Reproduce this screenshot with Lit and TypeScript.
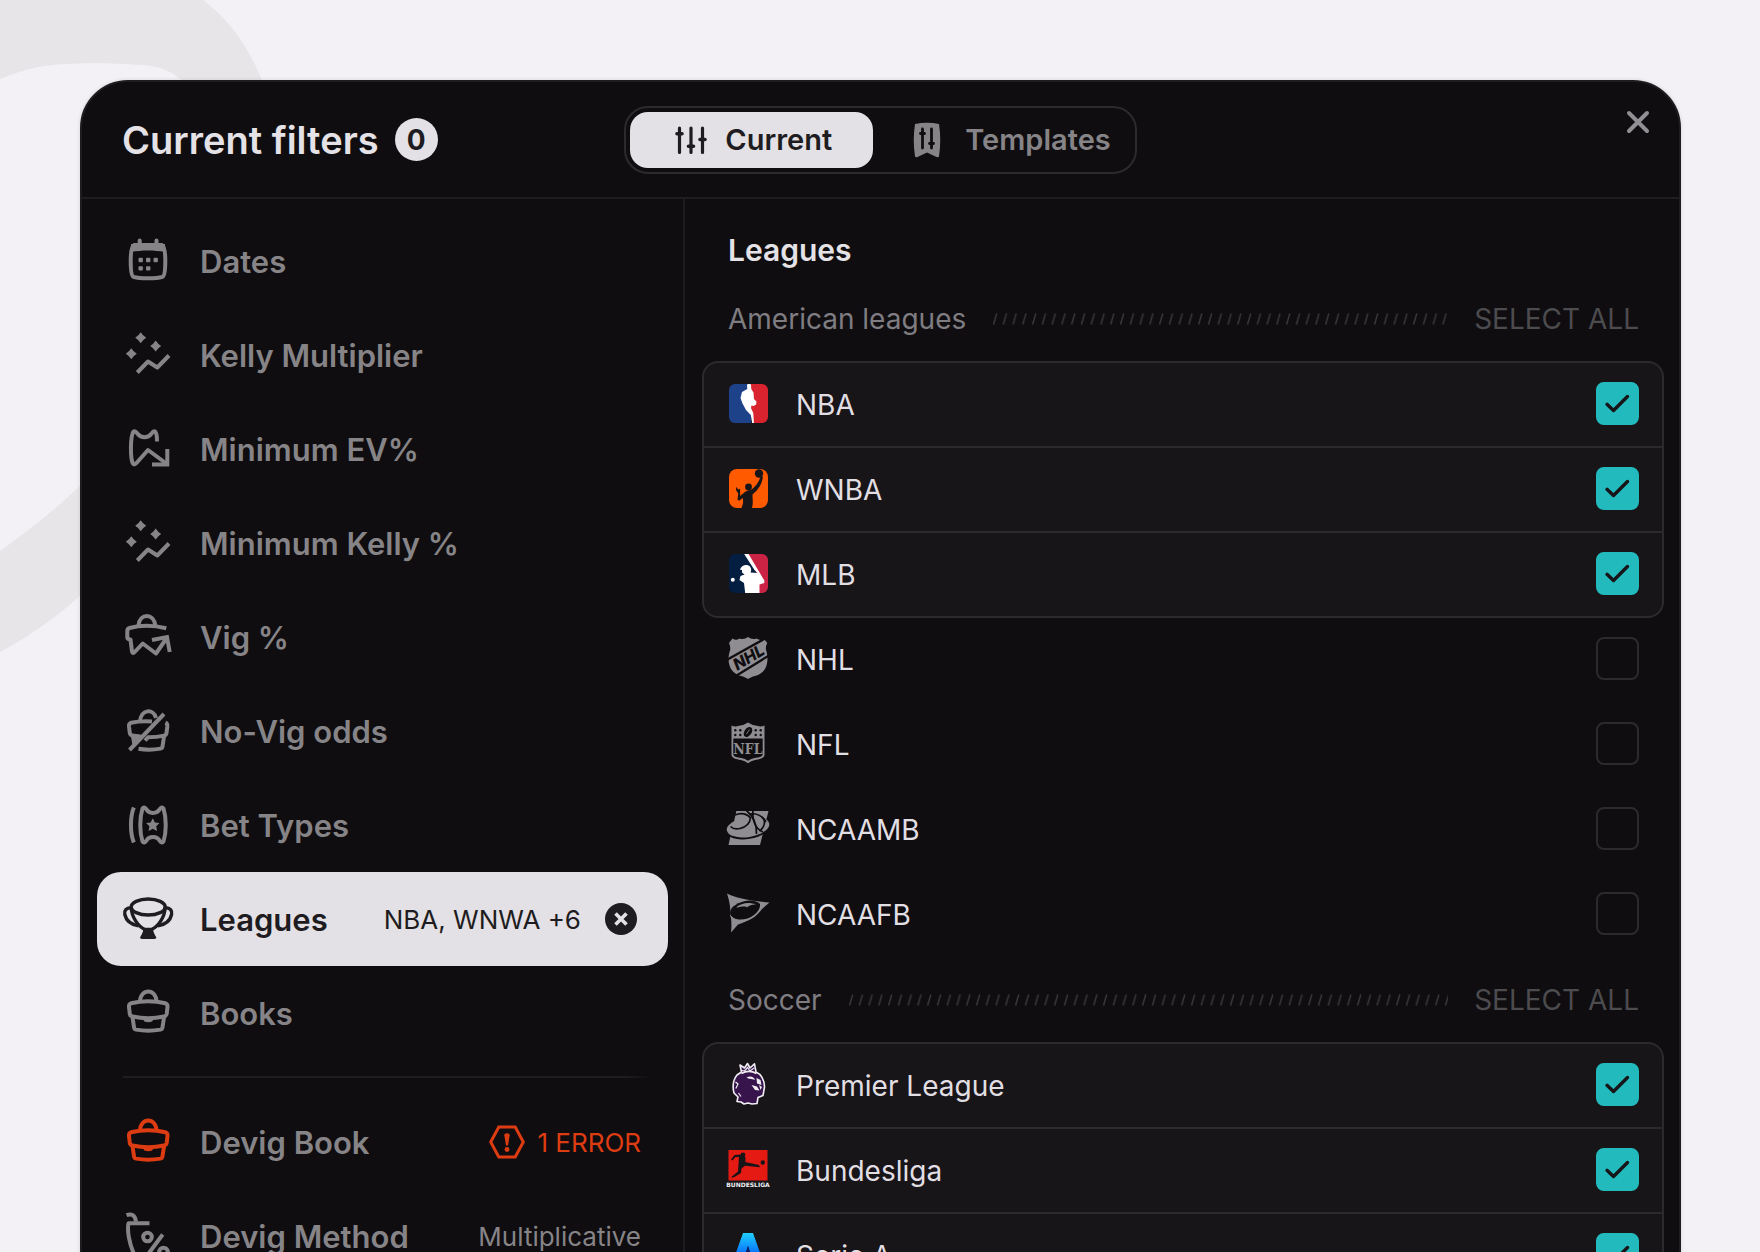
import { LitElement, html, svg, css, nothing } from "lit";
import type { TemplateResult } from "lit";
import { customElement, property, state } from "lit/decorators.js";
import { classMap } from "lit/directives/class-map.js";

type Shape = TemplateResult;

/* ---------- Sidebar icons, 48 x 48 ---------- */

const sparkTrend = svg`
  <g fill="currentColor" stroke="none">
    <path d="M16.700 1.200Q18.800 4.600 22.200 6.700Q18.800 8.800 16.700 12.200Q14.600 8.800 11.200 6.700Q14.600 4.600 16.700 1.200Z" />
    <path d="M31.700 9.500Q33.800 12.900 37.200 15Q33.800 17.100 31.700 20.500Q29.600 17.100 26.200 15Q29.600 12.900 31.700 9.500Z" />
    <path d="M7.300 17.200Q9.400 20.600 12.800 22.700Q9.400 24.800 7.300 28.200Q5.200 24.800 1.800 22.700Q5.200 20.600 7.300 17.200Z" />
  </g>
  <path d="M13.300 41.500L24 30.500L33.300 36.500L45 24.500" />`;

const briefcase = svg`
  <path d="M16 12.500C16.500 -.8 32 -.8 32.500 12.500" />
  <path d="M7 14.300C18 11.600 30.500 11.600 41.500 14.300C43 14.800 43.700 16 43.500 18L42.700 25C42.400 26.600 41.500 27.200 40 27.500C30 29.600 18.500 29.600 8.500 27.500C7 27.200 6 26.600 5.800 25L5 18C4.800 16 5.500 14.800 7 14.300Z" />
  <path d="M8.600 28.500L10 38.300C10.200 39.800 11 40.400 12 40.600C20 42 28.500 42 36.500 40.600C37.500 40.400 38.300 39.800 38.500 38.300L40 28.500" />
  <path d="M19.500 28H29V31C29 34 19.500 34 19.500 31Z" fill="currentColor" stroke="none" />`;

const ICONS: Record<string, Shape> = {
  calendar: svg`
    <path d="M10 8H38C40.500 9 41.300 15 41.300 24.500S40.500 39 38.500 39.800C32 41.800 16 41.800 9.500 39.800C7.500 39 6.700 34 6.700 24.500S7.500 9 10 8Z" />
    <path d="M7 7H41V15C30 13 18 13 7 15Z" fill="currentColor" stroke="none" />
    <path d="M15.700 3.500V8M32.500 3.500V8" stroke-linecap="round" />
    <g fill="currentColor" stroke="none">
      <rect x="14.500" y="20.800" width="4.400" height="4.400" rx="1" /><rect x="22" y="20.800" width="4.400" height="4.400" rx="1" />
      <rect x="29.500" y="20.800" width="4.400" height="4.400" rx="1" /><rect x="14.500" y="29.200" width="4.400" height="4.400" rx="1" />
      <rect x="22" y="29.200" width="4.400" height="4.400" rx="1" />
    </g>`,
  spark: sparkTrend,
  ticketDown: svg`
    <path d="M33 16.500C33 12 32.300 8 31.300 6.800C30 5.500 28.500 7 27.200 9C24 13.300 17 13.300 13.800 9C12.500 7 10.800 5.500 9.300 6.800C6.300 12 6.200 33 8.800 38.500C9.800 40 11.200 39.500 12.500 38L24 25L43 39" />
    <path d="M43.300 24V39.500H28" stroke-linejoin="miter" />`,
  bagUp: svg`
    <path d="M14.500 12.500C15.500 -.2 30 -.2 31.300 12.500" />
    <path d="M42.300 15.300C30 12.300 16 12.300 5.500 15C4 15.500 3.300 16.500 3.300 18V24.500C3.500 26 4.500 26.500 6.500 26.500L8 38.500C8.300 40.500 9.500 40.500 10.700 39L18.700 30.500L32 40.500L42 26" />
    <path d="M28 27L43 24L45.700 39" stroke-linejoin="miter" />`,
  bagOff: svg`
    <path d="M16 15C16.500 2 29.500 1 32 11" />
    <path d="M28 14.500C20 14 13 14.500 7 15.800C5.500 16.300 4.800 17.500 5 19.500L5.800 26C6 27.500 7 28.300 8.500 28.600L17 29.800" />
    <path d="M9 29L10.300 37.500L17 30Z" fill="currentColor" />
    <path d="M41.500 15.500C43 16.300 43.500 17.500 43.300 19.500L42.500 26C42.300 27.500 41.500 28.300 40 28.600C34 30 30 30.200 24 30.300L21 33.500" />
    <path d="M40 29.500L38.500 39.500C38.300 41 37.500 41.400 36.500 41.600C29 43 22 43 14.500 41.800" />
    <path d="M40 7L5.500 43" />`,
  tickets: svg`
    <path d="M9.800 6.500C6 16 6 32 9.800 41.500" />
    <path d="M18.500 7.500C19.500 6 21 6.300 22 7.800C25 13.300 33 13.300 36 7.800C37 6.300 38.500 6 39.500 7.500C42.500 17 42.500 31 39.500 40.500C38.500 42 37 41.700 36 40.200C33 34.700 25 34.700 22 40.200C21 41.700 19.500 42 18.500 40.500C15.500 31 15.500 17 18.500 7.500Z" />
    <path d="M28.800 17.200L30.900 21.500L35.500 22.100L32.200 25.300L33 30L28.800 27.800L24.600 30L25.400 25.300L22.100 22.100L26.700 21.500Z" fill="currentColor" stroke="none" />`,
  trophy: svg`
    <g stroke-width="3.400">
      <ellipse cx="24.200" cy="12" rx="17" ry="8" />
      <path d="M7.200 12C7.500 22 14 31.500 21 34.500H27.400C34.400 31.500 40.900 22 41.200 12" />
      <path d="M7.500 12.800C2 12.500 0 16 .8 19.500C2 25 7 29.500 14.500 30.800" />
      <path d="M40.900 12.800C46.400 12.500 48.400 16 47.600 19.500C46.400 25 41.400 29.500 33.900 30.800" />
    </g>
    <path d="M19 33H29.400C28.800 36.500 30 38.500 32.400 42.500Q32 44 30 44H18.400Q16.400 44 16 42.500C18.400 38.500 19.600 36.500 19 33Z" fill="currentColor" stroke="none" />`,
  briefcase,
  percentBag: svg`
    <path d="M2.500 3.200C7 1.500 11 2.500 12 9.500" />
    <path d="M25.500 11.200H4.500C3 18 5 32 11 44" />
    <circle cx="23.500" cy="25" r="4.300" /><circle cx="39.500" cy="40" r="4.300" />
    <path d="M38.700 22.500L25 41" />`,
};

/* ---------- League logos, 44 x 44 ---------- */

const LOGOS: Record<string, Shape> = {
  nba: svg`
    <clipPath id="c"><rect x="3" y="2" width="39" height="39" rx="6" /></clipPath>
    <g clip-path="url(#c)">
      <rect width="25" height="44" fill="#1d428a" />
      <path d="M24 0H44V44H27L25 26Z" fill="#d9232e" />
      <path d="M22 1L25 2.500L25.300 7L27.500 10.500L28 17L30.400 19.500L30.200 22.500L27.500 24L25.500 23.500L25 26L27.300 31L28 42H26.300L24.800 33L20 28L16.500 21.500L14.500 16L16 10L21.300 7L21 3.500Z" fill="#fff" />
    </g>`,
  wnba: svg`
    <rect x="3" y="2" width="39" height="39" rx="8" fill="#ff5a00" />
    <g fill="#171518">
      <circle cx="33" cy="6.500" r="4.200" /><circle cx="22.500" cy="20" r="3.400" />
      <path d="M34.500 9L37 9.500C36 17 32.500 22.500 26.500 27.500C26.500 33 27.500 35 26 41H15.500C17.500 36 17.300 34 16.800 31L13 33.800L11.500 32.500L12.300 26.500L10 23L10.300 19.800L12 22.500L14 21.800L14.200 29L19.500 24.500L25.500 22.500C30 19 33.500 14.500 34.500 9Z" />
    </g>`,
  mlb: svg`
    <clipPath id="c"><rect x="3" y="2" width="39" height="39" rx="6" /></clipPath>
    <g clip-path="url(#c)">
      <rect width="44" height="44" fill="#041e42" />
      <path d="M20 0H44V44H32V24Z" fill="#cb2344" />
      <path d="M17.500 1H22L38.300 28.500L38.300 31L33.500 32.500V42H19.300L18 31L13.500 28L14.500 24L18.500 22.500L16 20.500V18L14 17.800C15 13 21 11.500 24 14.500C25.500 16.500 25.500 18.500 24.500 20.500L31.500 21L28.500 18Z" fill="#fff" />
      <circle cx="6.800" cy="27.800" r="2" fill="#fff" />
    </g>`,
  nhl: svg`
    <path d="M3 6L6.500 1.500Q10 4 13.500 1.500Q18 3 22 0Q26 3 30.500 1.500Q34 4 38 2L41.300 6Q39.500 9 40 13C42.500 20 42 29 37.500 34Q33 38.500 27 39.500Q24 40.500 22 42Q20 40.500 17 39.500Q11 38.500 6.500 34C2 29 1.500 20 4.200 13Q4.500 9 3 6Z" fill="#8f8d91" />
    <path d="M1 22.800L40 1M9 39.500L43 18.500" stroke="#0f0d10" stroke-width="2.200" />
    <text x="22.500" y="26" text-anchor="middle" transform="rotate(-31 22.500 20)" font-size="16" font-weight="800" font-style="italic" fill="#0f0d10">NHL</text>`,
  nfl: svg`
    <path d="M5.500 3.500Q9 5.500 13 3.800Q18 3.300 22 .5Q26 3.300 31 3.800Q35 5.500 38.500 3.500V33C38 36.500 34 37 29 38Q25 38.800 22 41.200Q19 38.800 15 38C10 37 6 36.500 5.500 33Z" fill="#8f8d91" />
    <path d="M7.300 16.500H36.700V32.500C36 35 33 35.200 28.500 36Q25 36.800 22 38.700Q19 36.800 15.500 36C11 35.200 8 35 7.300 32.500Z" fill="#0f0d10" />
    <g fill="#0f0d10">
      <circle cx="9.300" cy="8.200" r="1.200" /><circle cx="14.300" cy="8.200" r="1.200" /><circle cx="9.300" cy="13" r="1.200" /><circle cx="14.300" cy="13" r="1.200" />
      <circle cx="29.700" cy="8.200" r="1.200" /><circle cx="34.700" cy="8.200" r="1.200" /><circle cx="29.700" cy="13" r="1.200" /><circle cx="34.700" cy="13" r="1.200" />
      <ellipse cx="22" cy="10" rx="3.600" ry="5.500" transform="rotate(35 22 10)" />
    </g>
    <path d="M20.500 12L23.500 7.500" stroke="#8f8d91" stroke-width=".8" />
    <text x="22" y="31.500" text-anchor="middle" font-family="'DejaVu Serif Condensed', 'DejaVu Serif', serif" font-size="14" font-weight="700" fill="#8f8d91">NFL</text>`,
  ncaamb: svg`
    <path d="M10.500 4H42.500L34 38H2.500L4.500 29Z" fill="#8f8d91" />
    <ellipse cx="22" cy="21" rx="22.500" ry="11" transform="rotate(-9 22 21)" fill="#0f0d10" />
    <ellipse cx="22" cy="20" rx="21.500" ry="10" transform="rotate(-9 22 20)" fill="#8f8d91" />
    <path d="M10.500 4H33L36 14C36.500 20 33 26 26 28C17 28.500 10 27 7 22Z" fill="#8f8d91" />
    <g fill="none" stroke="#0f0d10" stroke-width="1.700">
      <path d="M9 8C15 5 22 7 24.500 11C24 16 20 20 14 21.500C10 22.500 6.500 21.500 4.500 19.500" />
      <path d="M20 3C27 9 31 18 30.500 27" /><path d="M27 3C26 12 29 22 37 25" /><path d="M23 7C29 6 36 8 40 15" />
      <path d="M36 10C40 13 39 20 33.500 24" />
    </g>`,
  ncaafb: svg`
    <path d="M1 1.500C10 6 22 8.500 43.500 10.500C32 20 24 29 12 32.500L5 40.500C6 32 5 27 4.500 20C4 12 3 8 1 1.500Z" fill="#8f8d91" />
    <ellipse cx="20" cy="18.500" rx="16" ry="9.500" transform="rotate(-12 20 18.500)" fill="#0f0d10" />
    <path d="M4 22C6 29 20 29.500 28 23C32 20 34.500 16 34 12L38.500 12C35 21 25 30 14 30.300C8 30.300 4 27 4 22Z" fill="#8f8d91" />
    <path d="M10 15.500C15 11 23 9.500 30 12.500C26 12.300 24 13 21 15.500C21 14 17 14 10 15.500Z" fill="#8f8d91" />`,
  premier: svg`
    <path d="M15.500 9L14 2L18.500 5L21.500 .5L24 5L28.500 .8L30 9C35 11 38.500 17 38.500 24L37 32.500L32 34.500L31 40.500L26 41L22 40L18 41L15 39L11 38.500L12 34L8 30C6.500 24 7 17 11 12Z" fill="#37144b" stroke="#f1eef3" stroke-width="1.600" stroke-linejoin="round" />
    <path d="M15.500 10.500C20 8 26 8 30.500 10.500" fill="none" stroke="#f1eef3" stroke-width="1.600" />
    <path d="M16 7.500L18.500 8L21.500 4.500L24 8L28 5" fill="none" stroke="#f1eef3" stroke-width="1.200" />
    <path d="M20.500 14.500C24 12.500 28 13.500 29 17C25.500 15.500 23 16.500 20.500 14.500ZM30.500 15L34.500 17L35.500 22L31 20.500ZM25.500 22L31 23.500L33.500 27.500L29 27ZM33 22L36 24L34.500 27Z" fill="#f1eef3" />
    <path d="M9.500 19L12 21L9.800 25.500M12.500 30L15 33.500" fill="none" stroke="#f1eef3" stroke-width="1.200" />`,
  bundesliga: svg`
    <rect x="2.500" y="2" width="39" height="30.500" fill="#e51a12" />
    <g fill="#171518">
      <circle cx="17" cy="7" r="2.400" /><circle cx="36.800" cy="14.500" r="2.200" />
      <path d="M5 11.500L8.500 7L15.500 6.500L19.500 9.500L19.300 14L33 17L34 19.300L19 17.800L15.500 20.500L15 25L7.500 29.500L5 29.300L12 23.500L12.500 16L13 9L9.500 9L6.500 12.500Z" />
    </g>
    <text x="22" y="39" text-anchor="middle" font-family="'DejaVu Sans', sans-serif" font-size="6" font-weight="700" fill="#f1eef3">BUNDESLIGA</text>`,
  serieA: svg`
    <linearGradient id="g" x1="0" y1="0" x2="0" y2="1"><stop offset="0" stop-color="#1fd0fb" /><stop offset=".45" stop-color="#0a78ff" /><stop offset="1" stop-color="#0540c8" /></linearGradient>
    <path d="M17 0H27L42 42H31L22 13L13 42H2Z" fill="url(#g)" />
    <path d="M22 13L25 22H19Z" fill="#0a1f66" />`,
};

/* ---------- Data ---------- */

interface Filter {
  id: string;
  label: string;
  icon: string;
  value?: string;
  error?: string;
}

const FILTERS: Filter[] = [
  { id: "dates", label: "Dates", icon: "calendar" },
  { id: "kelly", label: "Kelly Multiplier", icon: "spark" },
  { id: "ev", label: "Minimum EV%", icon: "ticketDown" },
  { id: "min-kelly", label: "Minimum Kelly %", icon: "spark" },
  { id: "vig", label: "Vig %", icon: "bagUp" },
  { id: "no-vig", label: "No-Vig odds", icon: "bagOff" },
  { id: "bets", label: "Bet Types", icon: "tickets" },
  { id: "leagues", label: "Leagues", icon: "trophy", value: "NBA, WNWA +6" },
  { id: "books", label: "Books", icon: "briefcase" },
];

const DEVIG: Filter[] = [
  { id: "devig-book", label: "Devig Book", icon: "briefcase", error: "1 ERROR" },
  { id: "devig-method", label: "Devig Method", icon: "percentBag", value: "Multiplicative" },
];

interface League {
  name: string;
  logo: string;
}

const SECTIONS: { title: string; leagues: League[] }[] = [
  {
    title: "American leagues",
    leagues: [
      { name: "NBA", logo: "nba" },
      { name: "WNBA", logo: "wnba" },
      { name: "MLB", logo: "mlb" },
      { name: "NHL", logo: "nhl" },
      { name: "NFL", logo: "nfl" },
      { name: "NCAAMB", logo: "ncaamb" },
      { name: "NCAAFB", logo: "ncaafb" },
    ],
  },
  {
    title: "Soccer",
    leagues: [
      { name: "Premier League", logo: "premier" },
      { name: "Bundesliga", logo: "bundesliga" },
      { name: "Serie A", logo: "serieA" },
    ],
  },
];

/* ---------- Filter row in the sidebar ---------- */

@customElement("filter-item")
class FilterItem extends LitElement {
  @property({ attribute: false }) filter!: Filter;
  @property({ type: Boolean }) active = false;

  static styles = css`
    :host { display: block; }
    .item {
      display: flex;
      align-items: center;
      height: 94px;
      padding: 0 27px;
      border-radius: 24px;
      color: #868487;
    }
    .active { background: #e3e1e5; color: #1e1c20; }
    button {
      font: inherit;
      color: inherit;
      background: none;
      border: 0;
      padding: 0;
      cursor: pointer;
    }
    .main {
      display: flex;
      align-items: center;
      flex: 1;
      min-width: 0;
      height: 100%;
      text-align: left;
    }
    .icon {
      width: 48px;
      height: 48px;
      flex: none;
      overflow: visible;
      margin-right: 28px;
    }
    .error .icon, .status { color: #dd3c12; }
    .label { font-size: 31px; font-weight: 600; flex: 1; white-space: nowrap; }
    .value { font-size: 26px; font-weight: 400; white-space: nowrap; }
    .status { display: flex; align-items: center; gap: 12px; }
    .hex { width: 36px; height: 34px; }
    .clear { width: 32px; height: 32px; margin: 0 4px 0 24px; }
    .clear svg { display: block; width: 32px; height: 32px; }
  `;

  render() {
    const f = this.filter;
    return html`
      <div class=${classMap({ item: true, active: this.active, error: !!f.error })}>
        <button class="main" type="button" aria-current=${this.active ? "true" : "false"}>
          <svg class="icon" viewBox="0 0 48 48" fill="none" stroke="currentColor" stroke-width="4" stroke-linejoin="round" aria-hidden="true">
            ${ICONS[f.icon]}
          </svg>
          <span class="label">${f.label}</span>
          ${f.error
            ? html`<span class="status">
                <svg class="hex" viewBox="0 0 36 34" fill="none" stroke="currentColor" stroke-width="3" aria-hidden="true">
                  <path d="M9.800 2H26.200L34.300 17L26.200 32H9.800L1.700 17Z" />
                  <path d="M15.200 9.500Q18 7 20.800 9.500L19 20.500H17Z" fill="currentColor" stroke="none" />
                  <circle cx="18" cy="24.500" r="2.400" fill="currentColor" stroke="none" />
                </svg>
                <span class="value">${f.error}</span>
              </span>`
            : nothing}
          ${f.value ? html`<span class="value">${f.value}</span>` : nothing}
        </button>
        ${this.active
          ? html`<button class="clear" type="button" aria-label="Clear ${f.label}">
              <svg viewBox="0 0 32 32" aria-hidden="true">
                <circle cx="16" cy="16" r="16" fill="currentColor" />
                <path d="M10.500 10.500L21.500 21.500M21.500 10.500L10.500 21.500" stroke="#e3e1e5" stroke-width="3.600" />
              </svg>
            </button>`
          : nothing}
      </div>
    `;
  }
}

/* ---------- League row with its checkbox ---------- */

@customElement("league-row")
class LeagueRow extends LitElement {
  @property({ attribute: false }) league!: League;
  @property({ type: Boolean }) checked = false;

  static styles = css`
    :host { display: block; }
    .row {
      display: flex;
      align-items: center;
      height: 83px;
      padding: 0 23px 0 22px;
      cursor: pointer;
    }
    .logo {
      width: 44px;
      height: 44px;
      flex: none;
      overflow: visible;
      margin: 0 26px 2px 0;
      font-family: Inter, sans-serif;
    }
    .name { flex: 1; font-size: 28px; color: #e1dfe3; }
    .check { display: grid; width: 43px; height: 43px; margin-bottom: 2px; }
    .check > * { grid-area: 1 / 1; }
    input {
      appearance: none;
      width: 100%;
      height: 100%;
      box-sizing: border-box;
      margin: 0;
      border: 2px solid #2b2a2d;
      border-radius: 8px;
    }
    input:checked { background: #23babd; border-color: #23babd; }
    .tick { width: 43px; height: 43px; pointer-events: none; }
  `;

  private toggle(e: Event) {
    this.dispatchEvent(
      new CustomEvent("league-toggle", {
        detail: { name: this.league.name, checked: (e.target as HTMLInputElement).checked },
        bubbles: true,
        composed: true,
      }),
    );
  }

  render() {
    return html`
      <label class="row">
        <svg class="logo" viewBox="0 0 44 44" aria-hidden="true">${LOGOS[this.league.logo]}</svg>
        <span class="name">${this.league.name}</span>
        <span class="check">
          <input type="checkbox" .checked=${this.checked} @change=${this.toggle} />
          ${this.checked
            ? html`<svg class="tick" viewBox="0 0 43 43" fill="none" stroke="#171518" stroke-width="3.400" stroke-linecap="round" stroke-linejoin="round" aria-hidden="true">
                <path d="M11 22.300L17.500 28.500L31.500 14.500" />
              </svg>`
            : nothing}
        </span>
      </label>
    `;
  }
}

/* ---------- Page ---------- */

@customElement("app-root")
class AppRoot extends LitElement {
  @state() private selected = new Set(["NBA", "WNBA", "MLB", "Premier League", "Bundesliga", "Serie A"]);

  static styles = css`
    :host {
      display: block;
      font-family: Inter, "Liberation Sans", sans-serif;
      font-weight: 400;
    }
    .page {
      position: relative;
      height: 100vh;
      box-sizing: border-box;
      padding: 80px 79px 0 80px;
      overflow: hidden;
      background: #f3f1f5;
    }
    .backdrop { position: absolute; top: 0; left: 0; width: 300px; height: 680px; }
    .dialog {
      position: relative;
      min-height: 100%;
      box-sizing: border-box;
      background: #0f0d10;
      border: 2px solid #1e1d20;
      border-radius: 48px 48px 0 0;
      box-shadow: 0 0 4px #0000001f;
      overflow: hidden;
    }
    header {
      display: grid;
      grid-template-columns: 1fr auto 1fr;
      align-items: center;
      height: 115px;
      padding: 0 27px;
      border-bottom: 2px solid #1e1d20;
    }
    .title { display: flex; align-items: center; gap: 16px; padding-left: 13px; }
    h1 { margin: 0; font-size: 38px; line-height: 44px; font-weight: 600; color: #e4e2e6; white-space: nowrap; }
    .count {
      display: grid;
      place-items: center;
      width: 43px;
      height: 43px;
      border-radius: 50%;
      background: #e3e1e5;
      color: #1e1c20;
      font-size: 28px;
      font-weight: 700;
    }
    .tabs {
      display: flex;
      padding: 4px;
      border: 2px solid #2b2a2d;
      border-radius: 24px;
    }
    button { font: inherit; background: none; border: 0; padding: 0; cursor: pointer; }
    .tab {
      display: flex;
      align-items: center;
      height: 56px;
      gap: 17px;
      padding: 0 41px 0 42px;
      border-radius: 18px;
      color: #868487;
      font-size: 29px;
      font-weight: 600;
    }
    .tab + .tab { padding: 0 20px 0 36px; gap: 20px; }
    .tab svg { width: 36px; height: 36px; flex: none; }
    .tab.on { background: #e3e1e5; color: #1e1c20; }
    .close { justify-self: end; align-self: start; width: 28px; height: 28px; margin: 26px 0 0; color: #918f93; }
    .close svg { display: block; width: 28px; height: 28px; }
    .body { display: grid; grid-template-columns: 603px 1fr; }
    nav { padding: 15px 15px 32px; border-right: 2px solid #1e1d20; }
    .rule { height: 2px; margin: 16px 16px 17px 26px; border: 0; background: linear-gradient(90deg, #1e1d20 95%, transparent); }
    main { padding: 24px 15px 32px 17px; min-width: 0; }
    h2 { margin: 0; padding: 0 26px; font-size: 30px; line-height: 54px; font-weight: 600; color: #e4e2e6; }
    .section-head { display: flex; align-items: center; height: 84px; gap: 26px; padding: 0 25px 0 26px; }
    h3 { margin: 0; font-size: 28px; font-weight: 400; color: #7f7d81; }
    .hatch { flex: 1; min-width: 0; height: 12px; }
    .all { font-size: 28px; color: #4c4b4e; }
    .card { border: 2px solid #2b2a2d; border-radius: 16px; background: #171518; }
    .card league-row + league-row { border-top: 2px solid #2b2a2d; }
    .plain league-row { padding: 0 2px 2px; }
  `;

  private onToggle(e: CustomEvent) {
    const next = new Set(this.selected);
    if (e.detail.checked) next.add(e.detail.name);
    else next.delete(e.detail.name);
    this.selected = next;
  }

  private selectAll(leagues: League[]) {
    this.selected = new Set([...this.selected, ...leagues.map((l) => l.name)]);
  }

  private rows(leagues: League[]) {
    return leagues.map((l) => html`<league-row .league=${l} .checked=${this.selected.has(l.name)}></league-row>`);
  }

  private section(s: { title: string; leagues: League[] }, i: number) {
    const on = s.leagues.filter((l) => this.selected.has(l.name));
    const off = s.leagues.filter((l) => !this.selected.has(l.name));
    return html`
      <section>
        <div class="section-head">
          <h3>${s.title}</h3>
          <svg class="hatch" aria-hidden="true">
            <pattern id="hatch-${i}" width="9.77" height="12" patternUnits="userSpaceOnUse">
              <path d="M1.500 11.500L4.700 .5" stroke="#39383c" stroke-width="1.400" />
            </pattern>
            <rect width="100%" height="12" fill="url(#hatch-${i})" />
          </svg>
          <button class="all" type="button" @click=${() => this.selectAll(s.leagues)}>SELECT ALL</button>
        </div>
        ${on.length ? html`<div class="card">${this.rows(on)}</div>` : nothing}
        ${off.length ? html`<div class="plain">${this.rows(off)}</div>` : nothing}
      </section>
    `;
  }

  render() {
    return html`
      <div class="page">
        <svg class="backdrop" viewBox="0 0 300 680" fill="#e7e5e8" aria-hidden="true">
          <path d="M0 0H203C230 20 250 48 266 90H190C178 74 165 66 140 65C100 62 60 63 38 67C24 70 12 74 0 79Z" />
          <path d="M0 551C30 530 60 506 90 476V586C62 614 30 636 0 652Z" />
        </svg>
        <div class="dialog" role="dialog" aria-labelledby="title" @league-toggle=${this.onToggle}>
          <header>
            <div class="title">
              <h1 id="title">Current filters</h1>
              <span class="count">0</span>
            </div>
            <div class="tabs" role="tablist">
              <button class="tab on" type="button" role="tab" aria-selected="true">
                <svg viewBox="0 0 36 36" fill="none" stroke="currentColor" stroke-width="3.200" stroke-linecap="round" aria-hidden="true">
                  <path d="M7.500 6V30.500M19 6V30.500M30.500 6V30.500" />
                  <path d="M5 11.800H10M16.500 24.300H21.500M28 17.500H33" stroke-width="3.600" />
                </svg>
                Current
              </button>
              <button class="tab" type="button" role="tab" aria-selected="false">
                <svg viewBox="0 0 36 36" aria-hidden="true">
                  <path d="M6 2Q18 -.5 30 2Q32.500 18 30 34.500Q29 36 27 34.700L18 30.500L9 34.700Q7 36 6 34.500Q3.500 18 6 2Z" fill="currentColor" />
                  <g stroke="#0f0d10" stroke-width="2.800" stroke-linecap="round">
                    <path d="M13.500 7V26M22.500 7V26" /><path d="M11.500 11.500H15.500M20.500 21.500H24.500" />
                  </g>
                </svg>
                Templates
              </button>
            </div>
            <button class="close" type="button" aria-label="Close">
              <svg viewBox="0 0 28 28" stroke="currentColor" stroke-width="4" stroke-linecap="round" aria-hidden="true">
                <path d="M5 5L23 23M23 5L5 23" />
              </svg>
            </button>
          </header>
          <div class="body">
            <nav aria-label="Filters">
              ${FILTERS.map((f) => html`<filter-item .filter=${f} .active=${f.id === "leagues"}></filter-item>`)}
              <hr class="rule" />
              ${DEVIG.map((f) => html`<filter-item .filter=${f}></filter-item>`)}
            </nav>
            <main>
              <h2>Leagues</h2>
              ${SECTIONS.map((s, i) => this.section(s, i))}
            </main>
          </div>
        </div>
      </div>
    `;
  }
}
